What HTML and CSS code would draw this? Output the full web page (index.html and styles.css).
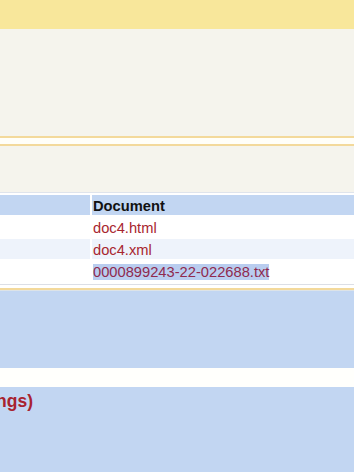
FILE: index.html
```html
<!DOCTYPE html>
<html>
<head>
<meta charset="utf-8">
<link rel="stylesheet" href="styles.css">
</head>
<body>
<div class="top-band"></div>
<div class="info"></div>
<div class="rule"></div>
<div class="rule-gap"></div>
<div class="rule"></div>
<div class="info info-short"></div>
<div class="table-wrap">
  <div class="doc-grid">
    <div class="cell head"></div>
    <div class="cell head"><b>Document</b></div>
    <div class="cell"></div>
    <div class="cell"><a class="link" href="#">doc4.html</a></div>
    <div class="cell alt"></div>
    <div class="cell alt"><a class="link" href="#">doc4.xml</a></div>
    <div class="cell"></div>
    <div class="cell"><a class="link selected" href="#">0000899243-22-022688.txt</a></div>
  </div>
</div>
<div class="rule-gap small"></div>
<div class="rule"></div>
<div class="rule-fade"></div>
<div class="blue-block"></div>
<div class="white-band"></div>
<div class="blue-block lower">
  <div class="heading-clip"><h2 class="section-title">(Reporting Holdings)</h2></div>
</div>
</body>
</html>
```
FILE: styles.css
```css
html, body {
  margin: 0;
  padding: 0;
}
body {
  width: 354px;
  height: 472px;
  overflow: hidden;
  background: #ffffff;
  font-family: "Liberation Sans", Arial, sans-serif;
}
.top-band {
  height: 29px;
  background: #f8e79b;
}
.info {
  height: 107px;
  background: #f5f4ed;
}
.info-short {
  height: 46px;
}
.rule {
  height: 2px;
  background: #f3d99b;
}
.rule-gap {
  height: 6px;
  background: #fffef8;
}
.rule-gap.small {
  height: 3px;
  background: #ffffff;
}
.rule-fade {
  height: 1px;
  background: #dce3e8;
}
.table-wrap {
  border-top: 1px solid #dfe4ec;
  border-bottom: 1px solid #dcdfe6;
  padding: 2px 0 3px 0;
  background: #ffffff;
}
.doc-grid {
  display: grid;
  grid-template-columns: 90px 1fr;
  grid-auto-rows: 20px;
  column-gap: 2px;
  row-gap: 2px;
}
.cell {
  box-sizing: border-box;
  height: 20px;
  padding: 1px 1px 0 1px;
  font-size: 14.7px;
  line-height: 20px;
  white-space: nowrap;
  color: #111111;
}
.cell.head {
  background: #c2d6f2;
}
.cell.alt {
  background: #eef3fb;
}
.link {
  color: #a8262f;
  text-decoration: none;
}
.link.selected {
  background: #b9cdef;
  color: #8f2a4e;
}
.blue-block {
  height: 77px;
  background: #c2d6f2;
}
.white-band {
  height: 19px;
  background: #fffffc;
}
.blue-block.lower {
  height: 85px;
}
.heading-clip {
  width: 33px;
  overflow: hidden;
  display: flex;
  justify-content: flex-end;
  padding-top: 3px;
}
.section-title {
  margin: 0;
  flex: none;
  white-space: nowrap;
  font-size: 17.5px;
  line-height: 22px;
  font-weight: bold;
  color: #a8232f;
}
```
